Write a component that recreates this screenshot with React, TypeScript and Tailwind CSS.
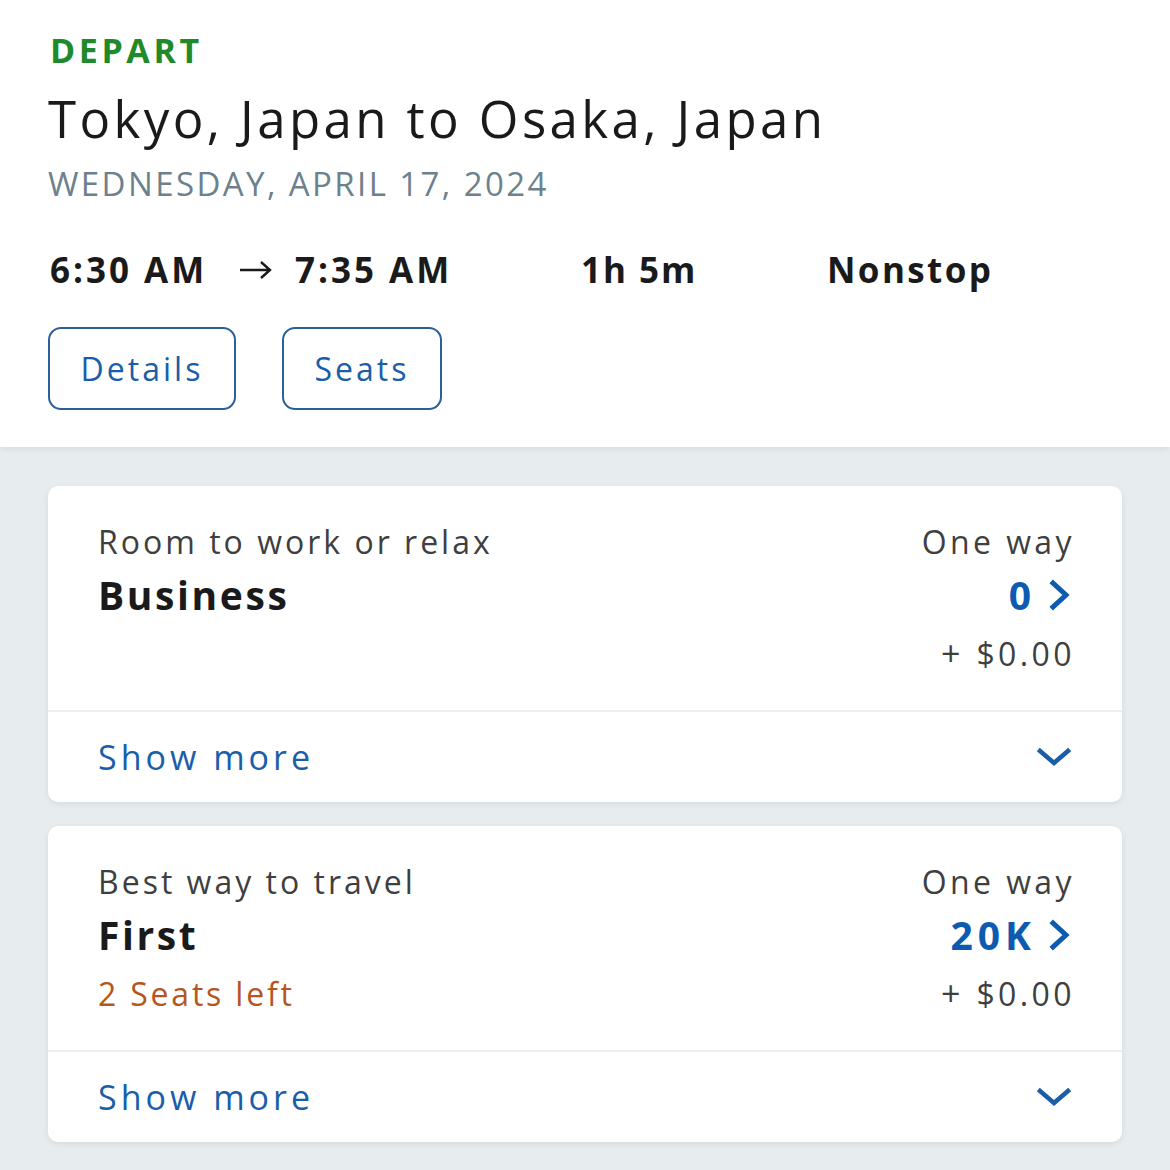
import React from 'react';

const font = { fontFamily: '"Open Sans", "Noto Sans", sans-serif' };

function ChevronRight() {
    return (
        <svg width="24" height="32" viewBox="0 0 24 32" fill="none" className="ml-[12px]">
            <path d="M5 4 L18 16 L5 28" stroke="#0d5bb0" strokeWidth="5" strokeLinecap="square" strokeLinejoin="miter" />
        </svg>
    );
}

function ChevronDown() {
    return (
        <svg width="36" height="20" viewBox="0 0 36 20" fill="none">
            <path d="M4 4 L18 16 L32 4" stroke="#1a5ea9" strokeWidth="4.5" strokeLinecap="square" />
        </svg>
    );
}

function ArrowRight() {
    return (
        <svg width="35" height="20" viewBox="0 0 35 20" fill="none" className="ml-[25px] mr-[22px]">
            <path d="M2 10 H32 M23 2 L32 10 L23 18" stroke="#1a1a1a" strokeWidth="2.4" />
        </svg>
    );
}

function FareCard({ tagline, cabin, price, seats }: { tagline: string; cabin: string; price: string; seats?: string }) {
    return (
        <div className="bg-white rounded-[10px] shadow-[0_2px_6px_rgba(0,0,0,0.08)]">
            <div className="flex justify-between px-[50px] pt-[36px] h-[226px] border-b-2 border-[#eceff1]">
                <div className="flex flex-col">
                    <div className="text-[32px] leading-[40px] text-[#3f3f3f] tracking-[3px]">{tagline}</div>
                    <div className="text-[39px] leading-[54px] font-bold text-[#1a1a1a] mt-[6px] tracking-[2.6px]">{cabin}</div>
                    {seats && <div className="text-[32px] leading-[48px] text-[#b5561f] mt-[8px] tracking-[2.8px]">{seats}</div>}
                </div>
                <div className="flex flex-col items-end">
                    <div className="text-[32px] leading-[40px] text-[#3f3f3f] tracking-[3.4px] mr-[-3px]">One way</div>
                    <div className="flex items-center mt-[6px] h-[54px]">
                        <span className="text-[39px] font-bold text-[#0d5bb0] tracking-[5px]">{price}</span>
                        <ChevronRight />
                    </div>
                    <div className="flex items-baseline text-[32px] leading-[48px] text-[#3f3f3f] mt-[7px] mr-[-3px]">
                        <span className="text-[34px]">+</span>
                        <span className="ml-[16px] tracking-[3.4px]">$0.00</span>
                    </div>
                </div>
            </div>
            <div className="flex justify-between items-center px-[50px] h-[90px]">
                <span className="text-[34px] text-[#1a5ea9] tracking-[4px]">Show more</span>
                <ChevronDown />
            </div>
        </div>
    );
}

export default function App() {
    return (
        <div className="w-[1170px] h-[1170px] bg-[#e7edee] overflow-hidden" style={font}>
            <div className="bg-white px-[48px] pt-[28px] h-[447px] shadow-[0_3px_6px_rgba(0,0,0,0.06)] relative">
                <div className="text-[34px] leading-[44px] font-bold text-[#1f8a2c] ml-[2px] tracking-[3.6px]">DEPART</div>
                <div className="text-[51px] leading-[68px] text-[#1a1a1a] tracking-[3.4px] mt-[12px]">Tokyo, Japan to Osaka, Japan</div>
                <div className="text-[33px] leading-[40px] text-[#6d818d] tracking-[2.4px] mt-[12px]">WEDNESDAY, APRIL 17, 2024</div>
                <div className="flex items-center mt-[46px] h-[40px] text-[35px] font-bold text-[#1a1a1a] ml-[2px] tracking-[3px]">
                    <span className="w-[163px]">6:30 AM</span>
                    <ArrowRight />
                    <span className="w-[286px]">7:35 AM</span>
                    <span className="w-[246px] tracking-[2px]">1h 5m</span>
                    <span className="tracking-[2.4px]">Nonstop</span>
                </div>
                <div className="flex gap-[46px] mt-[37px]">
                    <button className="w-[188px] h-[83px] rounded-[13px] border-2 border-[#2a5f9e] text-[32px] text-[#1a5ea9] tracking-[3px]">Details</button>
                    <button className="w-[160px] h-[83px] rounded-[13px] border-2 border-[#2a5f9e] text-[32px] text-[#1a5ea9] tracking-[3px]">Seats</button>
                </div>
            </div>
            <div className="flex flex-col gap-[24px] px-[48px] pt-[39px]">
                <FareCard tagline="Room to work or relax" cabin="Business" price="0" />
                <FareCard tagline="Best way to travel" cabin="First" price="20K" seats="2 Seats left" />
            </div>
        </div>
    );
}
